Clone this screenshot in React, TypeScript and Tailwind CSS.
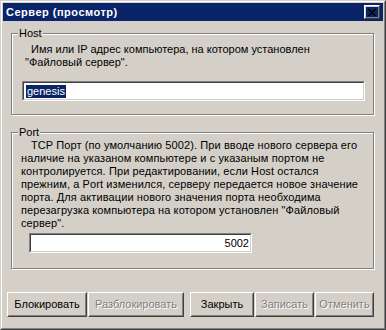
const FONT = "font-['Liberation_Sans',Arial,sans-serif]";

function Raised({ children, className = "" }: { children: React.ReactNode; className?: string }) {
  return (
    <div className={"border border-t-white border-l-white border-r-[#404040] border-b-[#404040] " + className}>
      <div className="h-full w-full border border-t-[#d4d0c8] border-l-[#d4d0c8] border-r-[#808080] border-b-[#808080] flex items-center justify-center">
        {children}
      </div>
    </div>
  );
}

function Sunken({ children, className = "" }: { children: React.ReactNode; className?: string }) {
  return (
    <div className={"border border-t-[#808080] border-l-[#808080] border-r-white border-b-white " + className}>
      <div className="h-full w-full border border-t-[#404040] border-l-[#404040] border-r-[#d4d0c8] border-b-[#d4d0c8] bg-white flex items-center">
        {children}
      </div>
    </div>
  );
}

function Group({ label, className = "", children }: { label: string; className?: string; children: React.ReactNode }) {
  return (
    <div className={"relative border border-[#808080] shadow-[inset_1px_1px_0_#fff,1px_1px_0_#fff] " + className}>
      <span className="absolute -top-[8px] left-[6px] bg-[#d4d0c8] px-[1px] leading-[14px]">{label}</span>
      {children}
    </div>
  );
}

function Btn({ label, disabled, w }: { label: string; disabled?: boolean; w: string }) {
  return (
    <Raised className={"h-[25px] " + w}>
      <span className={disabled ? "text-[#808080] [text-shadow:1px_1px_0_#fff]" : "text-black"}>{label}</span>
    </Raised>
  );
}

export default function App() {
  return (
    <div className={"w-[386px] h-[330px] bg-[#d4d0c8] text-[11px] text-black border border-t-[#d4d0c8] border-l-[#d4d0c8] border-r-[#404040] border-b-[#404040] " + FONT}>
      <div className="h-full border border-t-white border-l-white border-r-[#808080] border-b-[#808080] p-[1px] flex flex-col">
        {/* title bar */}
        <div className="h-[18px] bg-[#0a246a] flex items-center justify-between pl-[3px] pr-[3px]">
          <span className="text-white font-bold text-[11px] tracking-[0.5px]">Сервер (просмотр)</span>
          <Raised className="w-[16px] h-[14px]">
            <svg width="8" height="7" viewBox="0 0 8 7" shapeRendering="crispEdges">
              <path d="M0 0h2v1h-2zM6 0h2v1h-2zM1 1h2v1h-2zM5 1h2v1h-2zM2 2h4v1h-4zM3 3h2v1h-2zM2 4h4v1h-4zM1 5h2v1h-2zM5 5h2v1h-2zM0 6h2v1h-2zM6 6h2v1h-2z" fill="#000" />
            </svg>
          </Raised>
        </div>

        <div className="flex-1 flex flex-col pl-[8px] pr-[9px]">
          <Group label="Host" className="mt-[12px] h-[82px] pl-[9px] pr-[8px]">
            <div className="mt-[9px] leading-[13px]">
              <div className="pl-[10px]">Имя или IP адрес компьютера, на котором установлен</div>
              <div className="pl-[4px]">"Файловый сервер".</div>
            </div>
            <Sunken className="mt-[12px] ml-[1px] h-[20px]">
              <span className="ml-[2px] bg-[#0a246a] text-white leading-[13px] px-[1px]">genesis</span>
            </Sunken>
          </Group>

          <Group label="Port" className="mt-[17px] h-[137px] pl-[9px]">
            <div className="mt-[6px] leading-[13px] tracking-[0.1px]">
              <div className="pl-[10px]">TCP Порт (по умолчанию 5002). При вводе нового сервера его</div>
              <div>наличие на указаном компьютере и с указаным портом не</div>
              <div>контролируется. При редактировании, если Host остался</div>
              <div>прежним, а Port изменился, серверу передается новое значение</div>
              <div>порта. Для активации нового значения порта необходима</div>
              <div>перезагрузка компьютера на котором установлен "Файловый</div>
              <div>сервер".</div>
            </div>
            <Sunken className="mt-[3px] ml-[8px] w-[223px] h-[20px]">
              <span className="ml-auto mr-[1px]">5002</span>
            </Sunken>
          </Group>

          <div className="mt-[23px] flex">
            <div className="-ml-[4px] flex">
              <Btn label="Блокировать" w="w-[80px]" />
              <div className="ml-[1px]"><Btn label="Разблокировать" disabled w="w-[96px]" /></div>
            </div>
            <div className="ml-[6px] flex gap-[1px]">
              <Btn label="Закрыть" w="w-[64px]" />
              <Btn label="Записать" disabled w="w-[59px]" />
              <Btn label="Отменить" disabled w="w-[59px]" />
            </div>
          </div>
        </div>
      </div>
    </div>
  );
}
